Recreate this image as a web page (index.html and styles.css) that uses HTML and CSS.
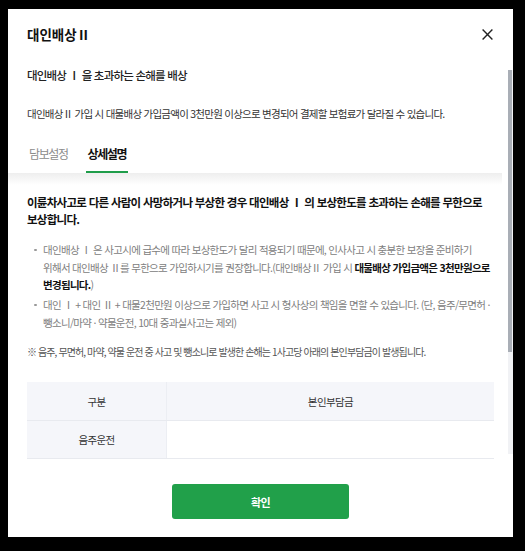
FILE: index.html
```html
<!DOCTYPE html>
<html lang="ko">
<head>
<meta charset="utf-8">
<title>대인배상Ⅱ</title>
<link rel="stylesheet" href="styles.css">
</head>
<body>
<div class="modal">
  <header class="modal-head">
    <h1 class="modal-title">대인배상Ⅱ</h1>
    <button class="close" type="button" aria-label="닫기">
      <svg width="11" height="11" viewBox="0 0 11 11"><path d="M0.6 0.6L10.4 10.4M10.4 0.6L0.6 10.4" stroke="#222" stroke-width="1.4" fill="none"/></svg>
    </button>
  </header>
  <div class="modal-body">
    <div class="scroll-content">
      <div class="intro">
        <p class="subtitle">대인배상 Ⅰ 을 초과하는 손해를 배상</p>
        <p class="desc">대인배상Ⅱ 가입 시 대물배상 가입금액이 3천만원 이상으로 변경되어 결제할 보험료가 달라질 수 있습니다.</p>
        <nav class="tabs">
          <span class="tab">담보설정</span>
          <span class="tab active">상세설명</span>
        </nav>
      </div>
      <div class="detail">
        <p class="lead">이륜차사고로 다른 사람이 사망하거나 부상한 경우 대인배상 Ⅰ 의 보상한도를 초과하는 손해를 무한으로 보상합니다.</p>
        <ul class="bullets">
          <li>대인배상 Ⅰ 은 사고시에 급수에 따라 보상한도가 달리 적용되기 때문에, 인사사고 시 충분한 보장을 준비하기 위해서 대인배상 Ⅱ를 무한으로 가입하시기를 권장합니다.(대인배상Ⅱ 가입 시 <strong>대물배상 가입금액은 3천만원으로 변경됩니다.</strong>)</li>
          <li>대인 Ⅰ + 대인 Ⅱ + 대물2천만원 이상으로 가입하면 사고 시 형사상의 책임을 면할 수 있습니다. (단, 음주/무면허 · 뺑소니/마약 · 약물운전, 10대 중과실사고는 제외)</li>
        </ul>
        <p class="note">※ 음주, 무면허, 마약, 약물 운전 중 사고 및 뺑소니로 발생한 손해는 1사고당 아래의 본인부담금이 발생됩니다.</p>
        <table class="cost">
          <tr><th class="col-head">구분</th><th>본인부담금</th></tr>
          <tr><th class="col-head">음주운전</th><td></td></tr>
        </table>
      </div>
    </div>
    <div class="scrollbar"><div class="thumb"></div></div>
  </div>
  <footer class="modal-foot">
    <button class="confirm" type="button">확인</button>
  </footer>
</div>
</body>
</html>
```

FILE: styles.css
```css
html, body {
  margin: 0;
  padding: 0;
}

body {
  background: #000;
  font-family: "Noto Sans CJK KR", "Noto Sans", sans-serif;
  color: #222;
  width: 525px;
  height: 551px;
  overflow: hidden;
}

p, h1, ul {
  margin: 0;
  padding: 0;
}

.modal {
  margin: 9px 0 0 8px;
  width: 505px;
  height: 528px;
  background: #fff;
  display: flex;
  flex-direction: column;
}

.modal-head {
  box-sizing: border-box;
  height: 51px;
  padding: 16px 20px 0 19px;
  display: flex;
  align-items: flex-start;
  justify-content: space-between;
}

.modal-title {
  font-size: 13.5px;
  line-height: 18px;
  font-weight: 700;
  letter-spacing: 0;
  color: #111;
}

.close {
  width: 11px;
  height: 18px;
  padding: 0;
  border: 0;
  background: none;
  display: flex;
  align-items: center;
}

.modal-body {
  height: 402px;
  display: flex;
  overflow: hidden;
}

.scroll-content {
  flex: 1;
  min-width: 0;
}

.scrollbar {
  width: 5px;
  margin: 10px 0 8px 6px;
  background: #f1f2f5;
}

.thumb {
  width: 4px;
  height: 282px;
  background: #a9aeb6;
}

.intro {
  padding: 6px 19px 0;
}

.subtitle {
  font-size: 11.5px;
  line-height: 18px;
  font-weight: 500;
  letter-spacing: -0.8px;
  color: #222;
}

.desc {
  margin-top: 22px;
  font-size: 10.5px;
  line-height: 16px;
  letter-spacing: -0.75px;
  color: #333;
}

.tabs {
  margin-top: 23px;
  display: flex;
  gap: 16px;
}

.tab {
  padding: 0 2px 8px;
  font-size: 12px;
  line-height: 18px;
  letter-spacing: -1.4px;
  color: #8c8c8c;
  border-bottom: 2px solid transparent;
}

.tab.active {
  color: #111;
  font-weight: 700;
  border-bottom-color: #1f9d4a;
}

.detail {
  padding: 21px 7px 0 19px;
  background: linear-gradient(to bottom, #eeeeee 0, #ffffff 12px);
}

.lead {
  font-size: 11.5px;
  line-height: 17px;
  font-weight: 700;
  letter-spacing: -0.72px;
  color: #111;
  word-break: keep-all;
}

.bullets {
  margin-top: 13px;
  list-style: none;
  padding-left: 16px;
}

.bullets li {
  position: relative;
  font-size: 10.5px;
  line-height: 17.5px;
  letter-spacing: -0.7px;
  color: #808080;
  word-break: keep-all;
}

.bullets li + li {
  margin-top: 2.5px;
}

.bullets li::before {
  content: "";
  position: absolute;
  left: -9px;
  top: 7.5px;
  width: 2.5px;
  height: 2.5px;
  border-radius: 50%;
  background: #999;
}

.bullets strong {
  color: #111;
  font-weight: 700;
}

.note {
  margin-top: 13px;
  font-size: 10px;
  line-height: 16px;
  letter-spacing: -0.9px;
  color: #555;
}

.cost {
  margin-top: 22px;
  width: calc(100% - 1px);
  border-collapse: collapse;
  table-layout: fixed;
}

.cost th, .cost td {
  font-size: 10.5px;
  font-weight: 400;
  letter-spacing: -0.6px;
  color: #333;
  text-align: center;
  border-bottom: 1px solid #e8eaef;
  padding: 0;
}

.cost tr:first-child th {
  height: 38px;
  background: #f5f6fa;
}

.cost tr:last-child th, .cost tr:last-child td {
  height: 37px;
}

.cost .col-head {
  width: 139px;
  background: #f5f6fa;
  border-right: 1px solid #eceef3;
}

.modal-foot {
  flex: 1;
  display: flex;
  justify-content: center;
  align-items: flex-start;
  padding-top: 22px;
}

.confirm {
  width: 177px;
  height: 35px;
  border: 0;
  border-radius: 3px;
  background: #21a04a;
  color: #fff;
  font-family: inherit;
  font-size: 11px;
  font-weight: 700;
  letter-spacing: -0.5px;
}
```
